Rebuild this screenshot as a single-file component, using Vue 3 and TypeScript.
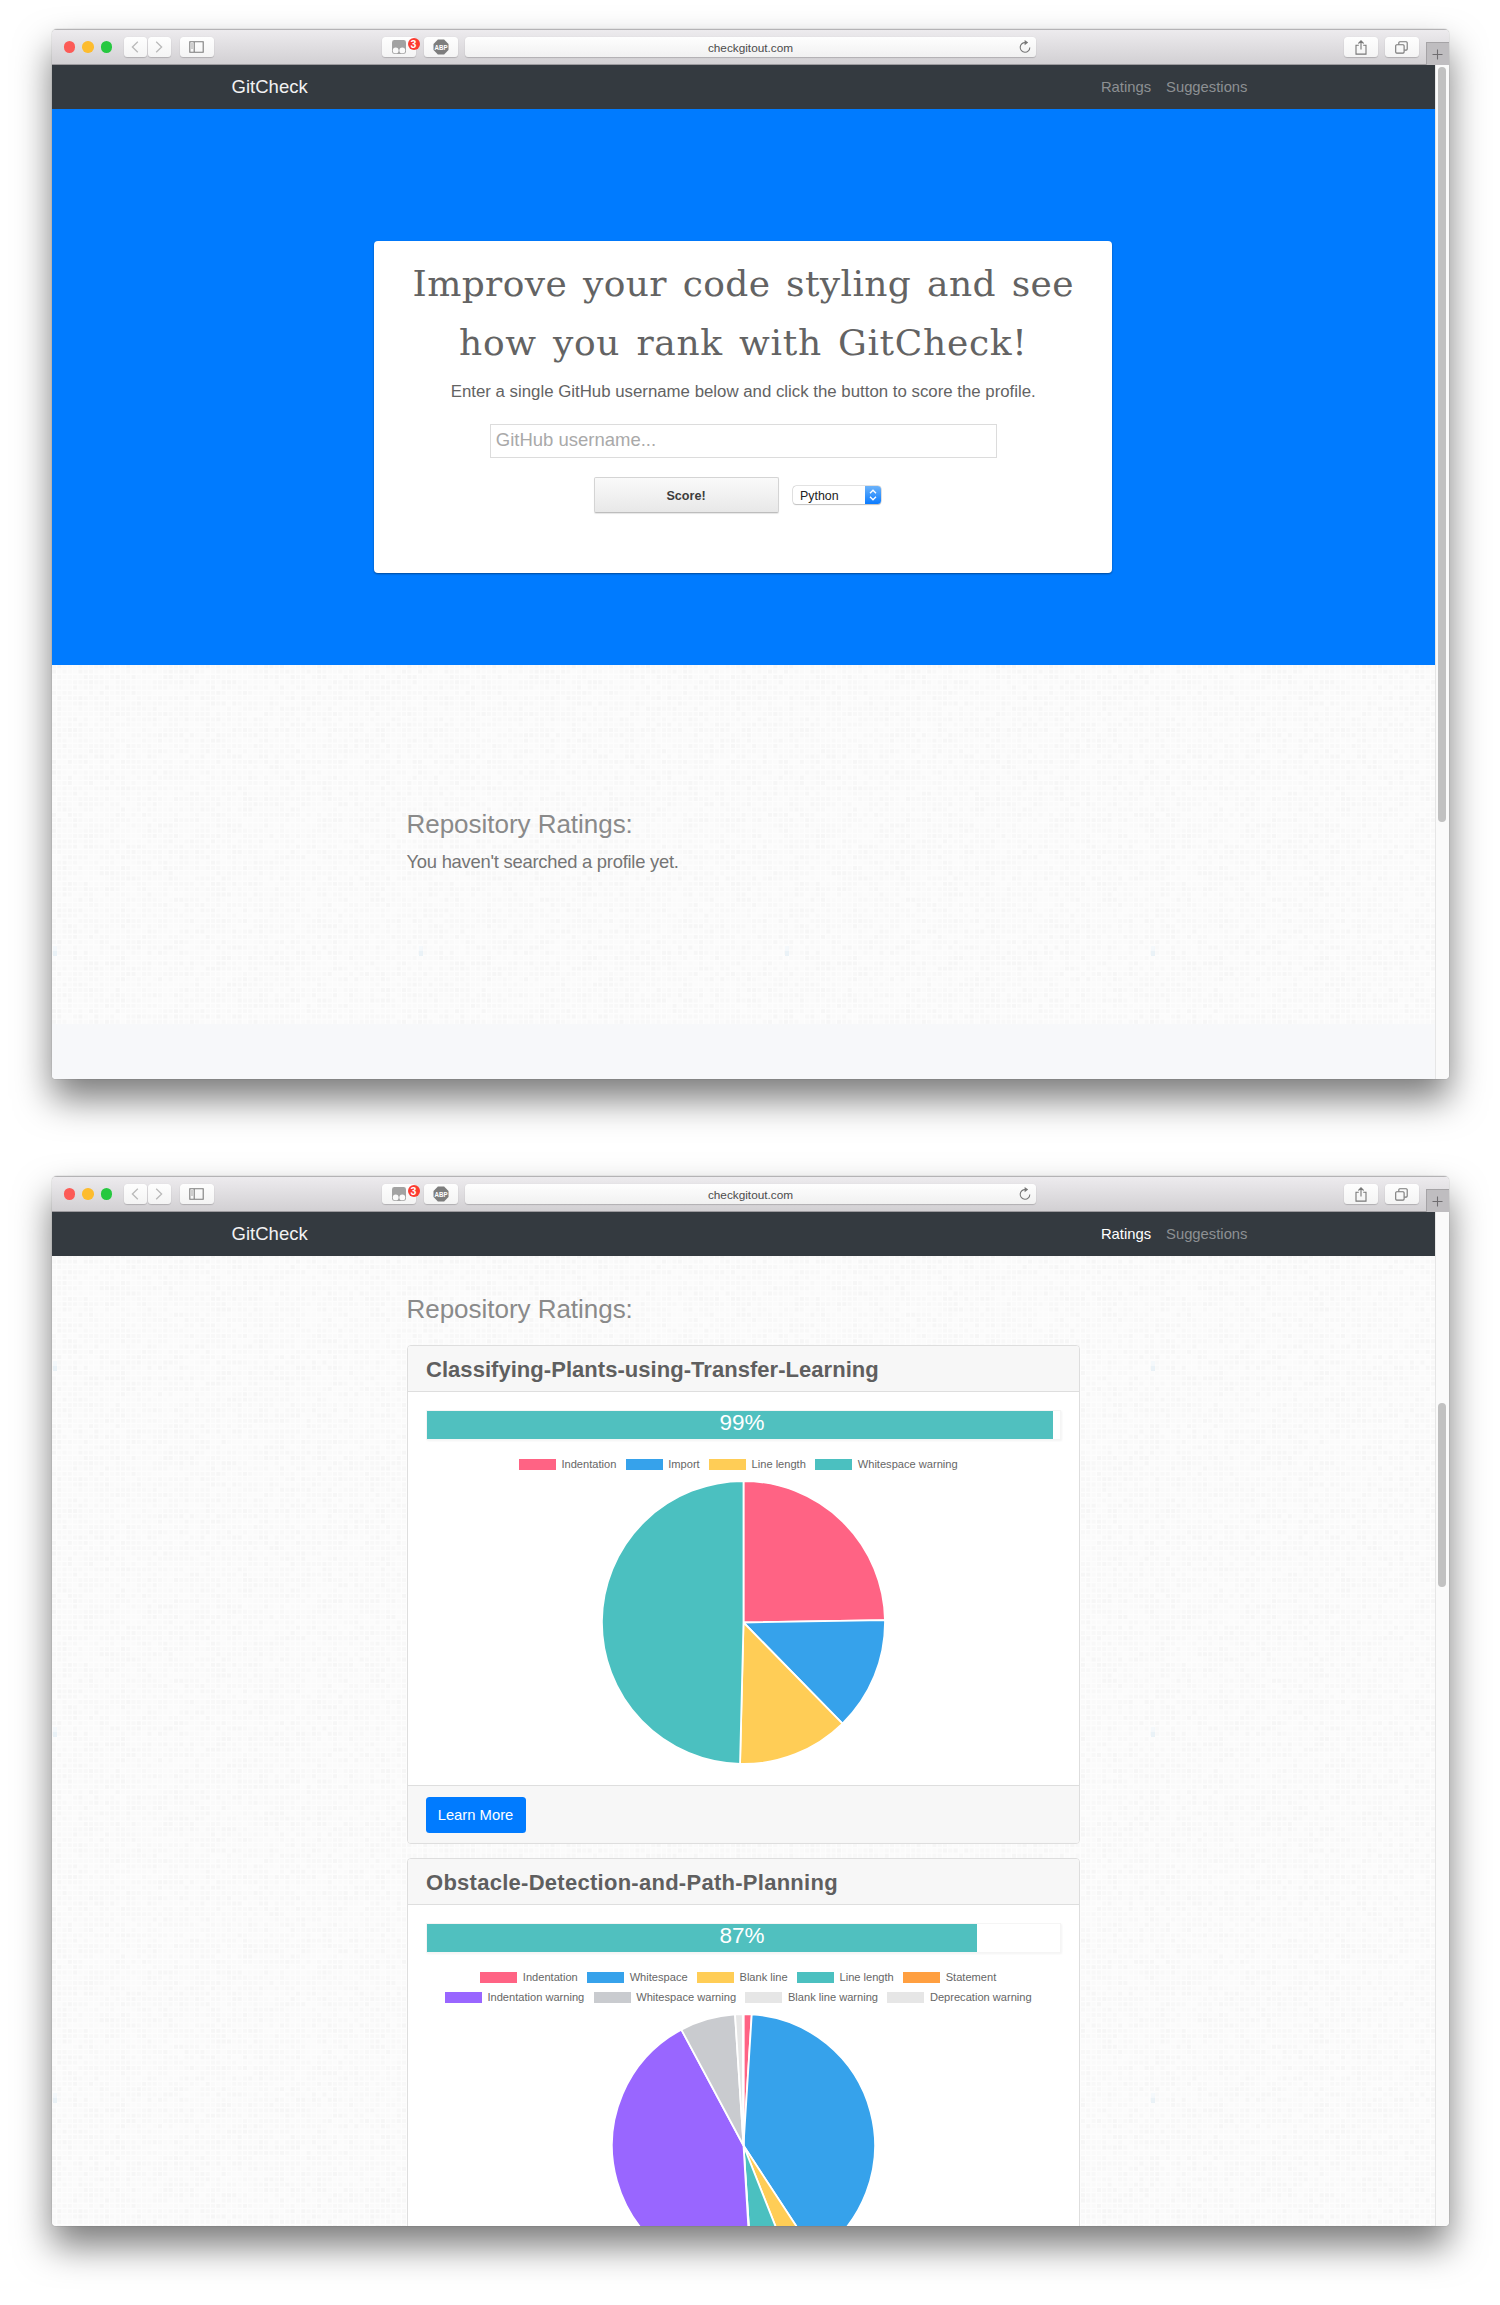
<script setup lang="ts">
interface Slice { label: string; color: string; from: number; to: number }
interface Repo {
  name: string
  score: number
  radius: number
  tracking: number
  linked: boolean
  rows: Slice[][]
}

const red = '#ff6384'
const blue = '#36a2eb'
const yellow = '#ffcd56'
const teal = '#4bc0c0'
const orange = '#ff9f40'
const purple = '#9966ff'
const grey = '#c9cbcf'
const light = '#e6e6e6'

const repos: Repo[] = [
  {
    name: 'Classifying-Plants-using-Transfer-Learning',
    score: 99,
    radius: 141.5,
    tracking: 0.04,
    linked: true,
    rows: [[
      { label: 'Indentation', color: red, from: 0, to: 89 },
      { label: 'Import', color: blue, from: 89, to: 135.6 },
      { label: 'Line length', color: yellow, from: 135.6, to: 181.4 },
      { label: 'Whitespace warning', color: teal, from: 181.4, to: 360 },
    ]],
  },
  {
    name: 'Obstacle-Detection-and-Path-Planning',
    score: 87,
    radius: 131.5,
    tracking: 0.27,
    linked: false,
    rows: [
      [
        { label: 'Indentation', color: red, from: 0, to: 3.6 },
        { label: 'Whitespace', color: blue, from: 3.6, to: 146.8 },
        { label: 'Blank line', color: yellow, from: 146.8, to: 158.4 },
        { label: 'Line length', color: teal, from: 158.4, to: 176.2 },
        { label: 'Statement', color: orange, from: 176.2, to: 176.6 },
      ],
      [
        { label: 'Indentation warning', color: purple, from: 176.6, to: 331.8 },
        { label: 'Whitespace warning', color: grey, from: 331.8, to: 356.3 },
        { label: 'Blank line warning', color: light, from: 356.3, to: 359.7 },
        { label: 'Deprecation warning', color: light, from: 359.7, to: 360 },
      ],
    ],
  },
]

const windows = [
  { id: 'home', active: false, thumbTop: 2, thumbHeight: 755 },
  { id: 'ratings', active: true, thumbTop: 191, thumbHeight: 184 },
]

function slicePath(s: Slice, r: number): string {
  const pt = (deg: number) => {
    const a = (deg * Math.PI) / 180
    return `${(r + r * Math.sin(a)).toFixed(2)} ${(r - r * Math.cos(a)).toFixed(2)}`
  }
  const large = s.to - s.from > 180 ? 1 : 0
  return `M${r} ${r}L${pt(s.from)}A${r} ${r} 0 ${large} 1 ${pt(s.to)}Z`
}

// Woven paper texture: a tile of small squares in four shades
const CELLS = 69
const STEP = 366 / CELLS
const weaveOpacity = [0.007, 0.013, 0.02, 0.028]
const weave = weaveOpacity.map(() => '')
let seed = 71
const rand = () => {
  seed = (seed * 16807) % 2147483647
  return seed / 2147483647
}
for (let y = 0; y < CELLS; y++) {
  for (let x = 0; x < CELLS; x++) {
    const level = Math.floor(((rand() + rand()) / 2) * 4)
    weave[level] += `M${(x * STEP).toFixed(1)} ${(y * STEP).toFixed(1)}h3.9v3.9h-3.9z`
  }
}
</script>

<template>
  <main class="desk">
    <section v-for="w in windows" :key="w.id" class="window">
      <header class="toolbar">
        <div class="lights"><i class="close" /><i class="min" /><i class="max" /></div>
        <div class="btn back">
          <svg width="8" height="12" viewBox="0 0 8 12"><path d="M6.8 .8 1.4 6l5.4 5.2" fill="none" stroke="#b9b9b9" stroke-width="1.3" /></svg>
        </div>
        <div class="btn fwd">
          <svg width="8" height="12" viewBox="0 0 8 12"><path d="M1.2 .8 6.6 6l-5.4 5.2" fill="none" stroke="#b9b9b9" stroke-width="1.3" /></svg>
        </div>
        <div class="btn side">
          <svg width="15" height="12" viewBox="0 0 15 12"><path d="M.8 .8h13.4v10.4H.8zM5.2 .8v10.4" fill="none" stroke="#7b7b7b" stroke-width="1.1" /><path d="M2 3h2M2 5h2M2 7h2" stroke="#9a9a9a" stroke-width=".9" /></svg>
        </div>
        <div class="btn monkey">
          <svg width="14" height="14" viewBox="0 0 14 14"><rect width="14" height="14" rx="2.4" fill="#a2a2a2" /><circle cx="3.7" cy="10.4" r="2.9" fill="#fafafa" /><circle cx="10.3" cy="10.4" r="2.9" fill="#fafafa" /></svg>
          <b class="badge">3</b>
        </div>
        <div class="btn abp">
          <svg width="16" height="16" viewBox="0 0 16 16"><path d="M4.9 .5h6.2l4.4 4.4v6.2l-4.4 4.4H4.9L.5 11.1V4.9z" fill="#7d7d7d" /><text x="8" y="10.5" text-anchor="middle" fill="#fff" font-size="7" font-weight="700" textLength="13" lengthAdjust="spacingAndGlyphs">ABP</text></svg>
        </div>
        <div class="url">
          <span>checkgitout.com</span>
          <svg class="reload" width="12" height="14" viewBox="0 0 12 14"><path d="M6.4 2.6A4.8 4.8 0 1 0 10.8 7.4" fill="none" stroke="#777" stroke-width="1.1" /><path d="M5.6 0v5.2L9.2 2.6z" fill="#777" /></svg>
        </div>
        <div class="btn share">
          <svg width="12" height="15" viewBox="0 0 12 15"><path d="M3.8 5.2H1v8.9h10V5.2H8.2M6 9.6V1M3.4 3.5 6 .9l2.6 2.6" fill="none" stroke="#777" stroke-width="1.1" /></svg>
        </div>
        <div class="btn tabs">
          <svg width="13" height="13" viewBox="0 0 13 13"><rect x=".7" y="3.7" width="8.4" height="8.4" rx="1" fill="none" stroke="#777" stroke-width="1.1" /><path d="M3.8 3.4V1.7q0-1 1-1h6.4q1 0 1 1v6.4q0 1-1 1H9.4" fill="none" stroke="#777" stroke-width="1.1" /></svg>
        </div>
        <div class="plus">
          <svg width="11" height="11" viewBox="0 0 11 11"><path d="M5.5 .5v10M.5 5.5h10" stroke="#6f6d70" stroke-width="1.1" /></svg>
        </div>
      </header>

      <div class="view">
        <div class="page">
          <svg class="texture" width="1383" height="1014" aria-hidden="true">
            <defs>
              <pattern :id="'weave-' + w.id" width="366" height="366" patternUnits="userSpaceOnUse">
                <path v-for="(d, i) in weave" :key="i" :d="d" :fill-opacity="weaveOpacity[i]" />
                <path d="M1 149h4v5h-4z" fill="#f4f8fb" />
                <path d="M1 154h4v5h-4z" fill="#eaf2f7" />
              </pattern>
            </defs>
            <rect width="1383" height="1014" fill="#fdfdfd" />
            <rect width="1383" height="1014" :fill="`url(#weave-${w.id})`" />
          </svg>

          <nav class="nav">
            <span class="brand">GitCheck</span>
            <a :class="{ on: w.active }">Ratings</a>
            <a>Suggestions</a>
          </nav>

          <template v-if="!w.active">
            <div class="hero">
              <div class="panel">
                <h1><span>Improve your code styling and see</span><span class="second">how you rank with GitCheck!</span></h1>
                <p>Enter a single GitHub username below and click the button to score the profile.</p>
                <div class="field">GitHub username...</div>
                <div class="actions">
                  <div class="score">Score!</div>
                  <div class="select">
                    <span>Python</span>
                    <i><svg width="8" height="12" viewBox="0 0 8 12"><path d="M1 4.2 4 1.2l3 3M1 7.8l3 3 3-3" fill="none" stroke="#fff" stroke-width="1.3" /></svg></i>
                  </div>
                </div>
              </div>
            </div>
            <div class="ratings empty">
              <h2>Repository Ratings:</h2>
              <p>You haven't searched a profile yet.</p>
            </div>
            <footer class="foot" />
          </template>

          <div v-else class="ratings list">
            <h2>Repository Ratings:</h2>
            <article v-for="r in repos" :key="r.name" class="card">
              <h3 :style="{ letterSpacing: r.tracking + 'px' }">{{ r.name }}</h3>
              <div class="body">
                <div class="meter">
                  <div class="fill" :style="{ width: r.score + '%' }" />
                  <span>{{ r.score }}%</span>
                </div>
                <div class="legend">
                  <div v-for="(row, i) in r.rows" :key="i" class="row">
                    <span v-for="s in row" :key="s.label" class="key"><i :style="{ background: s.color }" />{{ s.label }}</span>
                  </div>
                </div>
                <svg class="pie" :width="r.radius * 2" :height="r.radius * 2" :viewBox="`0 0 ${r.radius * 2} ${r.radius * 2}`">
                  <path v-for="s in r.rows.flat()" :key="s.label" :d="slicePath(s, r.radius)" :fill="s.color" stroke="#fff" stroke-width="1.8" stroke-linejoin="bevel" />
                </svg>
              </div>
              <div v-if="r.linked" class="bottom"><span class="more">Learn More</span></div>
            </article>
          </div>
        </div>
        <div class="scroll">
          <div class="thumb" :style="{ marginTop: w.thumbTop + 'px', height: w.thumbHeight + 'px' }" />
        </div>
      </div>
    </section>
  </main>
</template>

<style>
body { margin: 0; background: #fff; }
</style>

<style scoped>
* { box-sizing: border-box; }
.desk {
  width: 1500px; height: 2305px; overflow: hidden;
  padding: 29px 0 0 52px;
  display: flex; flex-direction: column; gap: 97px;
  font-family: "Liberation Sans", Arial, sans-serif;
  color: #636363; background: #fff;
}
.window {
  width: 1396.5px; height: 1050px; flex: none; overflow: hidden;
  border-radius: 5px 5px 4px 4px;
  box-shadow: 0 20px 36px rgba(0, 0, 0, .52), 0 0 1px rgba(0, 0, 0, .5);
}
.toolbar {
  height: 36px; display: flex; align-items: flex-start; padding: 7px 0 0 11px;
  border-top: 1px solid #b4b3b5; border-bottom: 1px solid #9c9a9e;
  background: linear-gradient(#edebee, #d2d0d3);
}
.lights { display: flex; gap: 7px; margin: 4px 11.5px 0 0; padding-left: .5px; width: 49px; }
.lights i { width: 11.5px; height: 11.5px; border-radius: 50%; }
.close { background: #fc5b57; }
.min { background: #fdbc2e; }
.max { background: #27c840; }
.btn {
  height: 20px; width: 34px; display: flex; align-items: center; justify-content: center; flex: none;
  background: linear-gradient(#fefefe, #f4f4f4); border-radius: 3.5px;
  box-shadow: 0 1px 1px rgba(0, 0, 0, .17), 0 0 1px rgba(0, 0, 0, .12);
}
.back, .fwd { width: 23px; }
.fwd { margin-left: 1px; }
.side { margin-left: 9px; }
.monkey { margin-left: 168px; position: relative; }
.abp { margin-left: 8px; }
.badge {
  position: absolute; left: 26px; top: 1px; width: 12px; height: 11.5px; border-radius: 6px;
  background: #fc3b30; color: #fff; font-size: 10.5px; line-height: 12px; text-align: center; font-weight: 700;
}
.url {
  margin-left: 7px; width: 571px; height: 20px; flex: none; border-radius: 3.5px; position: relative;
  background: linear-gradient(#fefefe, #f1f1f1); box-shadow: 0 1px 1px rgba(0, 0, 0, .17), 0 0 1px rgba(0, 0, 0, .12);
  font-size: 11.8px; line-height: 22px; text-align: center; color: #4c4c4c;
}
.url span { padding-left: 1px; }
.reload { position: absolute; right: 5px; top: 3px; }
.share { margin-left: 308px; }
.tabs { margin-left: 7px; }
.plus {
  margin: 5px 0 0 auto; width: 23px; height: 23px; display: flex; align-items: center; justify-content: center;
  background: #bfbdc0; border: 1px solid #a5a3a6; border-right: 0; border-bottom: 0; flex: none;
}
.view { height: 1014px; display: flex; }
.page { width: 1382.5px; height: 1014px; overflow: hidden; position: relative; }
.texture { position: absolute; left: 0; top: 0; z-index: 0; }
.nav, .hero, .ratings, .foot { position: relative; z-index: 1; }
.nav {
  height: 44px; display: flex; align-items: center; background: #343a40;
  padding: 0 187px 0 179.6px; gap: 15px; font-size: 14.8px; color: #8d9093;
}
.brand { font-size: 18.5px; color: #f2f2f3; margin-right: auto; }
.on { color: #fff; }
.hero { height: 556px; padding-top: 131.5px; background: #007bff; }
.panel {
  width: 738px; height: 332.5px; margin: 0 auto; background: #fff; border-radius: 4px;
  padding-top: 13.5px; text-align: center;
  box-shadow: 0 1px 2px rgba(0, 0, 0, .4);
}
.panel h1 {
  margin: 0; font: 400 36px/59px "DejaVu Serif", serif; word-spacing: 4px; letter-spacing: .37px;
  color: #636363; white-space: nowrap; display: flex; flex-direction: column; align-items: center;
}
.second { letter-spacing: .7px; }
.panel p { margin: 8px 0 19.5px; font-size: 16.82px; line-height: 23px; padding-bottom: 1px; }
.field {
  width: 507px; height: 34px; margin: 0 auto; border: 1px solid #dcdcdc; text-align: left;
  padding-left: 5px; font-size: 18.5px; line-height: 30px; color: #a9a9a9;
}
.actions { display: flex; justify-content: center; align-items: center; gap: 14px; margin-top: 19.5px; padding-right: 12.5px; }
.score {
  width: 185px; height: 36px; border: 1px solid #d4d4d4; border-bottom-color: #bdbdbd; border-radius: 2px;
  background: linear-gradient(#fafafa, #e8e8e8); box-shadow: 0 1px 1px rgba(0, 0, 0, .1);
  font-size: 12.6px; font-weight: 700; line-height: 36px; color: #3d3d3d;
}
.select {
  width: 88px; height: 18.5px; display: flex; border-radius: 3.5px; overflow: hidden; background: #fff;
  box-shadow: 0 0 0 .5px #c6c6c6, 0 1px 1px rgba(0, 0, 0, .25); font-size: 12.4px; line-height: 20px; color: #222;
}
.select span { flex: 1; text-align: left; padding-left: 7.5px; }
.select i { width: 15.5px; display: flex; align-items: center; justify-content: center; background: linear-gradient(#6cb3fa, #0a7bff); }
.ratings { padding-left: 354.5px; }
.empty { height: 358.5px; padding-top: 143px; }
.list { padding-top: 37px; }
h2 { margin: 0; font-weight: 400; font-size: 26px; line-height: 32px; color: #8a8a8a; letter-spacing: -.03px; }
.empty p { margin: 8px 0 0; font-size: 18.4px; line-height: 28px; color: #757575; letter-spacing: -.25px; }
.foot { height: 56px; background: #f7f8fa; }
.card { width: 673px; margin-bottom: 14px; border: 1px solid #dedede; border-radius: 4px; background: #fff; overflow: hidden; }
.list h2 { margin-bottom: 20px; }
.card h3 {
  margin: 0; height: 46px; padding-left: 18.5px; font-size: 22px; line-height: 47px; color: #5f5f5f;
  background: #f7f7f7; border-bottom: 1px solid #dedede;
}
.body { padding: 18px 18px 21px; display: flex; flex-direction: column; align-items: center; }
.meter {
  width: 635px; height: 30px; position: relative; border: 1px solid #f5f5f5; box-shadow: 1px 1px 2px rgba(0, 0, 0, .05);
  font-size: 22.5px; line-height: 24px; color: #fff; text-align: center;
}
.fill { height: 27.5px; background: #50c0bf; }
.meter span { position: absolute; left: 0; right: 2px; top: 0; }
.legend { margin: 19px 0 11px; display: flex; flex-direction: column; gap: 9px; }
.row { display: flex; justify-content: center; height: 11px; }
.key { display: flex; align-items: center; font-size: 11.1px; line-height: 11px; margin-right: 9.4px; white-space: nowrap; color: #666; }
.key i { width: 37px; height: 11px; margin-right: 5.5px; }
.pie { display: block; }
.bottom { height: 58px; padding: 11px 18px; border-top: 1px solid #dedede; background: #f7f7f7; }
.more {
  display: block; width: 100px; height: 35.5px; border-radius: 3.5px; background: #007bff; color: #fff;
  font-size: 14.8px; line-height: 36px; text-align: center;
}
.scroll { width: 14px; background: #fafafa; border-left: 1px solid #e6e6e6; }
.thumb { width: 8px; margin-left: 2.5px; border-radius: 4px; background: #c1c1c1; }
</style>
